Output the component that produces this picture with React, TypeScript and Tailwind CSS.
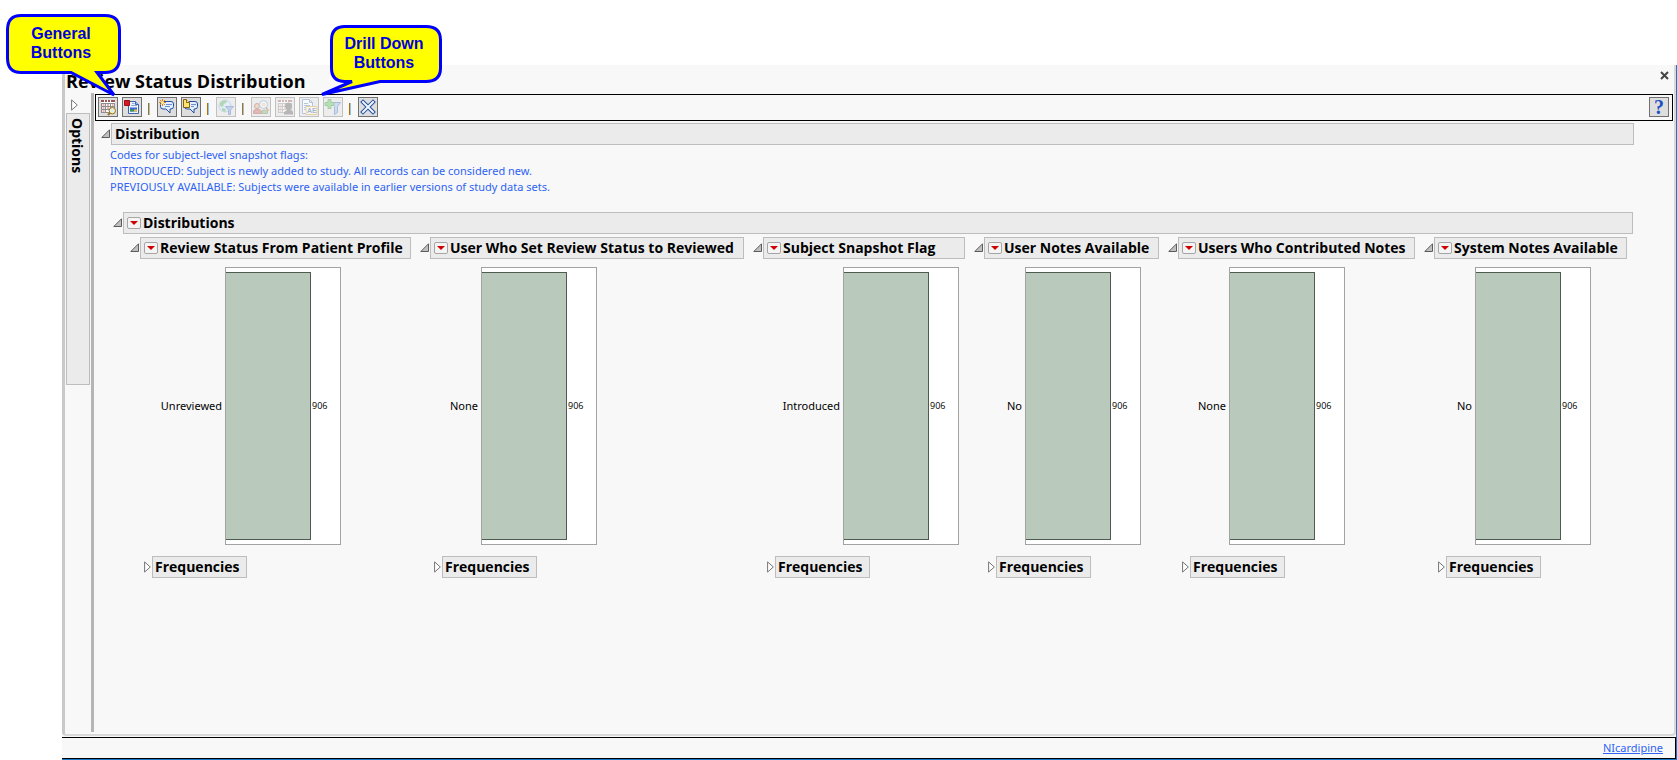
import type { ReactNode } from "react";

type Column = {
  title: string;
  level: string;
  count: number;
  labelWidth: string;
};

const COLUMNS: Column[] = [
  { title: "Review Status From Patient Profile", level: "Unreviewed", count: 906, labelWidth: "w-[95px]" },
  { title: "User Who Set Review Status to Reviewed", level: "None", count: 906, labelWidth: "w-[61px]" },
  { title: "Subject Snapshot Flag", level: "Introduced", count: 906, labelWidth: "w-[90px]" },
  { title: "User Notes Available", level: "No", count: 906, labelWidth: "w-[51px]" },
  { title: "Users Who Contributed Notes", level: "None", count: 906, labelWidth: "w-[61px]" },
  { title: "System Notes Available", level: "No", count: 906, labelWidth: "w-[51px]" },
];

function OpenToggle({ label }: { label: string }) {
  return (
    <button type="button" aria-label={`Collapse ${label}`} aria-expanded="true" className="w-[10px] shrink-0">
      <svg width="10" height="10" viewBox="0 0 10 10" className="block">
        <path d="M8.5 0.8V8.5H0.8Z" fill="#c0c0c0" stroke="#5c5c5c" />
      </svg>
    </button>
  );
}

function ClosedToggle({ label }: { label: string }) {
  return (
    <button type="button" aria-label={`Expand ${label}`} aria-expanded="false" className="w-2 shrink-0">
      <svg width="8" height="12" viewBox="0 0 8 12" className="block">
        <path d="M0.6 0.9L6.3 6L0.6 11.1Z" fill="#fff" stroke="#757575" />
      </svg>
    </button>
  );
}

function MenuButton({ label }: { label: string }) {
  return (
    <button
      type="button"
      aria-label={`${label} options`}
      className="grid h-3 w-[14px] shrink-0 place-items-center rounded-[2px] border border-[#a6a6a6] bg-[#f4f4f4]"
    >
      <svg width="8" height="4" viewBox="0 0 8 4">
        <path d="M0 0H8L4 4Z" fill="#d00000" />
      </svg>
    </button>
  );
}

function Outline({ title, menu = false }: { title: string; menu?: boolean }) {
  return (
    <div className="flex items-center">
      <OpenToggle label={title} />
      <div className="flex h-[22px] min-w-0 flex-1 items-center gap-[2px] border border-[#bdbdbd] bg-[#ebebeb] pl-[3px]">
        {menu && <MenuButton label={title} />}
        <h2 className="text-[14px] leading-5 font-bold whitespace-nowrap">{title}</h2>
      </div>
    </div>
  );
}

function DistributionColumn({ title, level, count, labelWidth }: Column) {
  return (
    <section className="min-w-0">
      <Outline title={title} menu />
      <div className="mt-2 flex h-[278px]">
        <div
          className={`${labelWidth} shrink-0 self-center pr-[3px] text-right font-['Noto_Sans',sans-serif] text-[11px] leading-4`}
        >
          {level}
        </div>
        <div className="flex w-[116px] shrink-0 items-center border border-[#a3a3a3] bg-white py-1">
          <div className="h-full w-[85px] border-y border-r border-[#4f5a51] bg-[#b9c9bc]" />
          <span className="pl-px text-[9px] leading-4">{count}</span>
        </div>
      </div>
      <div className="mt-[11px] flex items-center pl-[14px]">
        <ClosedToggle label="Frequencies" />
        <h3 className="h-[22px] w-[95px] border border-[#bdbdbd] bg-[#ebebeb] pl-[2px] text-[14px] leading-5 font-bold">
          Frequencies
        </h3>
      </div>
    </section>
  );
}

function ToolButton({ label, disabled, children }: { label: string; disabled?: boolean; children: ReactNode }) {
  return (
    <button
      type="button"
      aria-label={label}
      title={label}
      disabled={disabled}
      className="grid h-5 w-5 shrink-0 place-items-center border border-[#707070] bg-[#dedede] disabled:opacity-40"
    >
      <svg width="18" height="18" viewBox="0 0 18 18" fill="none">
        {children}
      </svg>
    </button>
  );
}

function Separator() {
  return (
    <span className="mx-[2px] mt-[6px] flex h-3 w-[3px]" aria-hidden>
      <span className="w-px bg-[#b86f00]" />
      <span className="w-px bg-[#8cc4ee]" />
    </span>
  );
}

function TableGrid() {
  return (
    <>
      <path d="M2 2H16V15H2Z" fill="#fff" />
      <path d="M2 3H5M6 3H8M9 3H11M12 3H16" stroke="#9c5252" strokeWidth="2" />
      <path d="M2 5.5H16M2 8.5H16M2 11.5H16M2 14.5H16M2.5 5V15M6.5 5V15M11.5 5V15M15.5 5V15" stroke="#8e8e8e" />
      <path d="M3.5 7H5.5M8 7H10M13 7H14.5M3.5 10H5.5M8 10H10M3.5 13H5.5" stroke="#cf6a6a" />
    </>
  );
}

function SpeechBubble() {
  return (
    <path
      d="M6 3.5H13Q15.5 3.5 15.5 6V8.5Q15.5 11 13 11H12V15L8 11H5Q2.5 11 2.5 8.5V6Q2.5 3.5 6 3.5Z"
      fill="#e3eeff"
      stroke="#234f9c"
    />
  );
}

function Toolbar() {
  return (
    <div role="toolbar" aria-label="Report" className="flex h-[27px] items-start gap-1 border border-black pt-[2px] pr-[3px] pl-[2px]">
      <ToolButton label="View data">
        <TableGrid />
        <path d="M11 15L9 17" stroke="#a06b20" strokeWidth="2" />
        <circle cx="13.3" cy="12.7" r="3.2" fill="#f6f2bd" stroke="#8f7020" />
        <circle cx="13.3" cy="12.4" r="1.6" fill="#d7ecff" />
      </ToolButton>
      <ToolButton label="Create report">
        <path d="M5.5 3.5H12.5L15.5 6.5V15.5H5.5Z" fill="#eef4ff" stroke="#3f65ad" />
        <path d="M12.5 3.5V6.5H15.5" fill="#9fc0f4" stroke="#3f65ad" />
        <path d="M9 5.5H11.5M8 7.5H14" stroke="#8ba7d8" />
        <path d="M7 9.5H14V13.5H7Z" fill="#3d6ad0" />
        <path d="M7 12.5H10.5" stroke="#3c9b42" strokeWidth="2" />
        <path d="M11 12.5H14" stroke="#e9c044" strokeWidth="2" />
        <path d="M1.5 2.5H6.5V7.5H1.5Z" fill="#d71920" stroke="#9e1015" />
      </ToolButton>
      <Separator />
      <ToolButton label="Add note">
        <SpeechBubble />
        <path d="M8 6.5H14M7 8.5H12" stroke="#6c90cf" />
        <path d="M4.5 1V8M1 4.5H8M2 2L7 7M7 2L2 7" stroke="#e87c13" />
        <circle cx="4.5" cy="4.5" r="1.5" fill="#fff3a0" />
      </ToolButton>
      <ToolButton label="View notes">
        <SpeechBubble />
        <path d="M9 6.5H14M9 8.5H12" stroke="#6c90cf" />
        <path d="M1.5 1.5H4.5L7.5 4.5V9.5H1.5Z" fill="#ffe36e" stroke="#86630f" />
        <path d="M4.5 1.5V4.5H7.5" fill="#fff6bd" stroke="#86630f" />
      </ToolButton>
      <Separator />
      <ToolButton label="Filter report" disabled>
        <circle cx="8" cy="8" r="6" fill="#c3ddfa" stroke="#7aa3d8" />
        <path d="M3 5Q6 1.5 10 3L9 5L6.5 6V8L4.5 9L3 7ZM5 10L9 11L8 14L5 12.5Z" fill="#45a64c" />
        <path d="M8.5 8.5H16.5L13.5 12V16.5H11.5V12Z" fill="#6d9ae5" stroke="#395fac" />
      </ToolButton>
      <Separator />
      <ToolButton label="Find subjects" disabled>
        <circle cx="5" cy="8" r="2.5" fill="#e7ad82" stroke="#8b432d" />
        <path d="M1.5 15.5V13Q2.5 11 5 11Q8 11 9.5 13V15.5Z" fill="#c95751" stroke="#963c38" />
        <path d="M10 12.5Q13 11 15.5 13.5V15.5H10Z" fill="#72ad68" stroke="#50824a" />
        <circle cx="11.5" cy="6.5" r="4" fill="#e4f1ff" stroke="#6289b5" />
        <circle cx="11.5" cy="6.5" r="2" fill="#efc29e" />
        <path d="M14 9.5L16.5 13" stroke="#a87025" strokeWidth="2" />
      </ToolButton>
      <ToolButton label="Patient profile" disabled>
        <TableGrid />
        <circle cx="12.5" cy="8" r="3.5" fill="#555" />
        <path d="M11 10H14V12L17 13.5V16.5H8V14L11 12Z" fill="#555" />
      </ToolButton>
      <ToolButton label="Adverse event narrative" disabled>
        <path d="M2.5 1.5H9.5L12.5 4.5V15.5H2.5Z" fill="#fff" stroke="#4f7ac2" />
        <path d="M9.5 1.5V4.5H12.5M4 5.5H8M4 7.5H10M4 9.5H6M4 11.5H6" stroke="#4f7ac2" />
        <path d="M6 8.5H17V16.5H6Z" fill="#fff9df" stroke="#c89433" />
        <text x="7" y="15" fontSize="7" fontWeight="700" fontFamily="Liberation Sans, sans-serif" fill="#26569f">
          AE
        </text>
      </ToolButton>
      <ToolButton label="Create subject filter" disabled>
        <path d="M6.5 4.5H16.5L13.5 8.5V14.5L10.5 16.5V8.5Z" fill="#8db4ec" stroke="#365fae" />
        <path d="M4 1.5H7V4.5H10V7.5H7V10.5H4V7.5H1V4.5H4Z" fill="#55bd54" stroke="#288a31" />
      </ToolButton>
      <Separator />
      <ToolButton label="Close all">
        <path d="M4 4L14 14M14 4L4 14" stroke="#244f9f" strokeWidth="4" strokeLinecap="square" />
        <path d="M4 4L14 14M14 4L4 14" stroke="#f0f6ff" strokeWidth="2" strokeLinecap="square" />
      </ToolButton>
      <button
        type="button"
        aria-label="Help"
        className="ml-auto grid h-5 w-5 place-items-center border border-[#707070] bg-[#dedede] font-['Liberation_Serif',serif] text-[20px] leading-[18px] font-bold text-[#1c50c4]"
      >
        ?
      </button>
    </div>
  );
}

function Callouts() {
  return (
    <>
      <div className="absolute top-[13px] left-[5px] h-[86px] w-[118px]">
        <svg width="118" height="86" viewBox="0 0 118 86" className="absolute inset-0">
          <path
            d="M16 2.5H100Q114.5 2.5 114.5 17V45Q114.5 59.5 100 59.5H92L109 82L66 59.5H16Q2.5 59.5 2.5 45V17Q2.5 2.5 16 2.5Z"
            fill="#ff0"
            stroke="#00f"
            strokeWidth="3"
          />
        </svg>
        <p className="relative pt-[11px] pr-[6px] text-center font-['Liberation_Sans',sans-serif] text-[16px] leading-[19px] font-bold text-[#00d]">
          General
          <br />
          Buttons
        </p>
      </div>
      <div className="absolute top-6 left-[318px] h-[74px] w-[126px]">
        <svg width="126" height="74" viewBox="0 0 126 74" className="absolute inset-0">
          <path
            d="M27 2.5H108Q122.5 2.5 122.5 16V44Q122.5 57.5 108 57.5H62L4 70.5L34 57.5H27Q13.5 57.5 13.5 44V16Q13.5 2.5 27 2.5Z"
            fill="#ff0"
            stroke="#00f"
            strokeWidth="3"
          />
        </svg>
        <p className="relative pt-[10px] pl-[6px] text-center font-['Liberation_Sans',sans-serif] text-[16px] leading-[19px] font-bold text-[#00d]">
          Drill Down
          <br />
          Buttons
        </p>
      </div>
    </>
  );
}

export default function App() {
  return (
    <div className="relative flex min-h-screen flex-col bg-white pt-[65px] pl-[62px] font-['Open_Sans',sans-serif] text-black">
      <div className="flex flex-1 flex-col border-r border-r-[#1979ca] bg-[#f8f8f8]">
        <main className="mb-px flex flex-1 flex-col rounded-b-[4px] border-r-2 border-b-2 border-l-[3px] border-[#d9d9d9] border-l-[#c9c9c9]">
          <header className="flex h-7 items-center justify-between pr-[5px] pl-px">
            <h1 className="pt-1 text-[18px] leading-6 font-bold">Review Status Distribution</h1>
            <button type="button" aria-label="Close" className="mb-2">
              <svg width="9" height="9" viewBox="0 0 9 9">
                <path d="M1 1L8 8M8 1L1 8" stroke="#444" strokeWidth="2" />
              </svg>
            </button>
          </header>

          <div className="flex flex-1 pb-[2px]">
            {/* Collapsed options pane */}
            <aside className="flex w-[26px] shrink-0 flex-col items-start gap-[2px] pt-[6px] pl-px">
              <div className="flex pl-[5px]">
                <ClosedToggle label="Options" />
              </div>
              <div className="h-[272px] w-6 border border-[#bdbdbd] bg-[#ebebeb] pt-1 pr-[2px] text-[14px] leading-5 font-bold [writing-mode:vertical-rl]">
                Options
              </div>
            </aside>
            <div className="w-[3px] shrink-0 bg-[#b5b5b5]" />

            <div className="min-w-0 flex-1 pt-px pr-px pl-px">
              <Toolbar />
              <div className="mt-[2px] pr-[39px] pl-[6px]">
                <Outline title="Distribution" />
                <p className="mt-[2px] pl-[9px] font-['Noto_Sans',sans-serif] text-[11px] leading-4 text-[#2e63f5]">
                  Codes for subject-level snapshot flags:
                  <br />
                  INTRODUCED: Subject is newly added to study. All records can be considered new.
                  <br />
                  PREVIOUSLY AVAILABLE: Subjects were available in earlier versions of study data sets.
                </p>
                <div className="mt-[17px] pr-px pl-3">
                  <Outline title="Distributions" menu />
                  <div className="mt-[3px] grid grid-cols-[281fr_324fr_212fr_185fr_247fr_203fr] gap-x-[9px] pr-[6px] pl-[17px]">
                    {COLUMNS.map((c) => (
                      <DistributionColumn key={c.title} {...c} />
                    ))}
                  </div>
                </div>
              </div>
            </div>
          </div>
        </main>

        <footer className="flex h-[22px] items-center justify-end border-y border-r border-black pr-3">
          <a href="#nicardipine" className="font-['Noto_Sans',sans-serif] text-[11px] leading-4 text-[#2e63f5] underline">
            NIcardipine
          </a>
        </footer>
      </div>
      <div className="h-px bg-[#1979ca]" />
      <Callouts />
    </div>
  );
}
